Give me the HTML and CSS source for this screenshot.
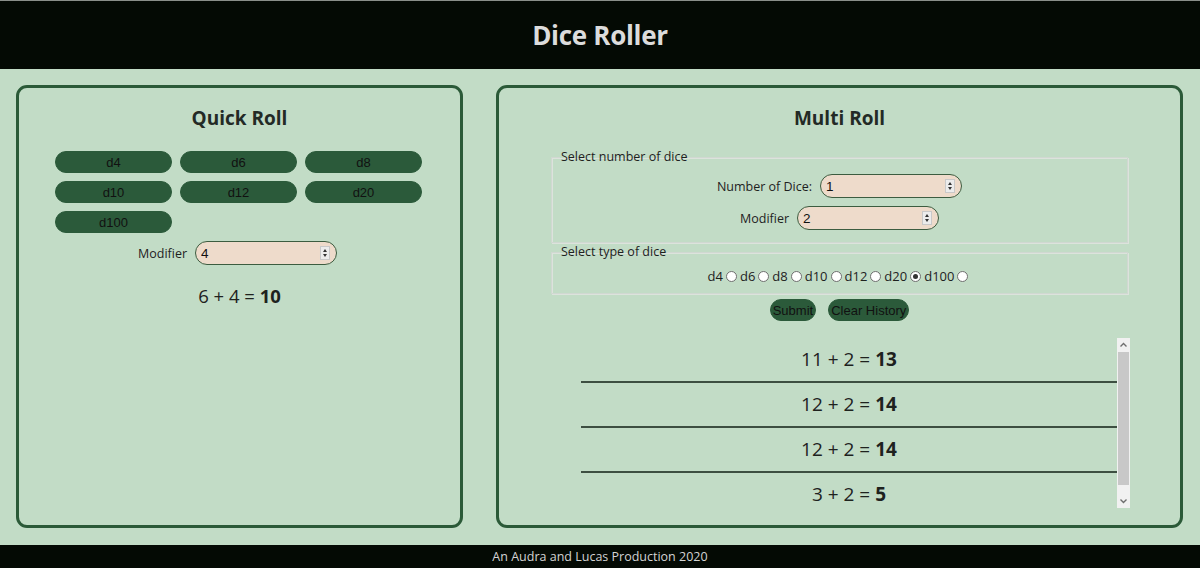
FILE: index.html
```html
<!DOCTYPE html>
<html lang="en">
<head>
<meta charset="utf-8">
<title>Dice Roller</title>
<link rel="stylesheet" href="styles.css">
</head>
<body>
<header class="topbar"><h1 class="site-title">Dice Roller</h1></header>
<main class="content">
  <section class="card quick">
    <h2 class="card-title">Quick Roll</h2>
    <div class="dice-grid">
      <button class="die-btn">d4</button>
      <button class="die-btn">d6</button>
      <button class="die-btn">d8</button>
      <button class="die-btn">d10</button>
      <button class="die-btn">d12</button>
      <button class="die-btn">d20</button>
      <button class="die-btn">d100</button>
    </div>
    <div class="field-row quick-row">
      <label class="field-label" for="qmod">Modifier</label>
      <span class="num-wrap">
        <input class="num-input" id="qmod" type="number" value="4">
        <span class="spin"><i class="spin-up"></i><i class="spin-down"></i></span>
      </span>
    </div>
    <p class="result">6 + 4 = <b>10</b></p>
  </section>
  <section class="card multi">
    <h2 class="card-title">Multi Roll</h2>
    <fieldset class="group group-count">
      <legend class="group-legend">Select number of dice</legend>
      <div class="field-row first">
        <label class="field-label" for="ndice">Number of Dice:</label>
        <span class="num-wrap">
          <input class="num-input" id="ndice" type="number" value="1">
          <span class="spin"><i class="spin-up"></i><i class="spin-down"></i></span>
        </span>
      </div>
      <div class="field-row">
        <label class="field-label" for="mmod">Modifier</label>
        <span class="num-wrap">
          <input class="num-input" id="mmod" type="number" value="2">
          <span class="spin"><i class="spin-up"></i><i class="spin-down"></i></span>
        </span>
      </div>
    </fieldset>
    <fieldset class="group group-type">
      <legend class="group-legend">Select type of dice</legend>
      <div class="radio-row">
        <label class="radio-label">d4<input class="radio" type="radio" name="die"></label>
        <label class="radio-label">d6<input class="radio" type="radio" name="die"></label>
        <label class="radio-label">d8<input class="radio" type="radio" name="die"></label>
        <label class="radio-label">d10<input class="radio" type="radio" name="die"></label>
        <label class="radio-label">d12<input class="radio" type="radio" name="die"></label>
        <label class="radio-label">d20<input class="radio" type="radio" name="die" checked></label>
        <label class="radio-label">d100<input class="radio" type="radio" name="die"></label>
      </div>
    </fieldset>
    <div class="actions">
      <button class="act-btn">Submit</button>
      <button class="act-btn">Clear History</button>
    </div>
    <div class="history">
      <div class="history-list">
        <div class="history-item">11 + 2 = <b>13</b></div>
        <div class="history-item">12 + 2 = <b>14</b></div>
        <div class="history-item">12 + 2 = <b>14</b></div>
        <div class="history-item">3 + 2 = <b>5</b></div>
      </div>
      <div class="scrollbar">
        <div class="sb-btn">
          <svg width="9" height="6" viewBox="0 0 9 6"><polyline points="1.5,4.5 4.5,1.5 7.5,4.5" fill="none" stroke="#6e6e6e" stroke-width="1.4"/></svg>
        </div>
        <div class="sb-track"><div class="sb-thumb"></div></div>
        <div class="sb-btn">
          <svg width="9" height="6" viewBox="0 0 9 6"><polyline points="1.5,1.5 4.5,4.5 7.5,1.5" fill="none" stroke="#6e6e6e" stroke-width="1.4"/></svg>
        </div>
      </div>
    </div>
  </section>
</main>
<footer class="bottombar">An Audra and Lucas Production 2020</footer>
</body>
</html>
```
FILE: styles.css
```css
* { box-sizing: border-box; }
html, body { margin: 0; padding: 0; }
body {
  width: 1200px;
  height: 568px;
  overflow: hidden;
  background: #c2dcc6;
  font-family: "Open Sans", "Noto Sans", sans-serif;
  color: #1e221e;
  display: flex;
  flex-direction: column;
}
.topbar {
  height: 69px;
  background: #040a04;
  border-top: 1px solid #8a8f8a;
  display: flex;
  align-items: center;
  justify-content: center;
}
.site-title {
  margin: 0;
  font-size: 26px;
  font-weight: 700;
  color: #dcdcdc;
  letter-spacing: -0.3px;
}
.content {
  flex: 1;
  display: grid;
  grid-template-columns: 447px 687px;
  column-gap: 33px;
  padding: 16px 17px 17px 16px;
}
.card {
  border: 3px solid #2b5a38;
  border-radius: 11px;
  display: flex;
  flex-direction: column;
}
.card-title {
  margin: 17px 0 0;
  text-align: center;
  font-size: 19px;
  line-height: 26px;
  font-weight: 700;
  color: #232a25;
}
.dice-grid {
  margin: 20px 0 0 36px;
  display: grid;
  grid-template-columns: repeat(3, 117px);
  grid-auto-rows: 22px;
  gap: 8px;
}
.die-btn, .act-btn {
  background: #2b5a3a;
  border: 1px solid #2b5a3a;
  border-radius: 11px;
  font-family: "Liberation Sans", Arial, sans-serif;
  font-size: 13px;
  color: #111;
  padding: 0;
}
.field-row {
  display: flex;
  justify-content: center;
  align-items: center;
  gap: 8px;
  margin-top: 8px;
}
.field-row.first { margin-top: 0; }
.quick-row { padding-right: 4px; }
.field-label {
  font-size: 12.5px;
  color: #1e221e;
}
.num-wrap {
  position: relative;
  display: block;
  width: 142px;
  height: 24px;
}
.num-input {
  display: block;
  width: 142px;
  height: 24px;
  border: 1.5px solid #3c5c40;
  border-radius: 12px;
  background: #eedbcb;
  font-family: "Liberation Sans", Arial, sans-serif;
  font-size: 13.5px;
  padding: 0 20px 0 5px;
  color: #111;
  -moz-appearance: textfield;
}
.num-input::-webkit-inner-spin-button,
.num-input::-webkit-outer-spin-button { -webkit-appearance: none; margin: 0; }
.spin {
  position: absolute;
  right: 7px;
  top: 5px;
  width: 10px;
  height: 14px;
  background: #ececec;
  border: 1px solid #c9c9c9;
  display: flex;
  flex-direction: column;
  align-items: center;
  justify-content: space-around;
  padding: 1px 0;
}
.spin-up, .spin-down {
  display: block;
  width: 0;
  height: 0;
  border-left: 2.5px solid transparent;
  border-right: 2.5px solid transparent;
}
.spin-up { border-bottom: 3px solid #333; }
.spin-down { border-top: 3px solid #333; }
.result {
  margin: 19px 0 0;
  text-align: center;
  font-size: 18.5px;
  line-height: 24px;
}
.result b, .history-item b { font-weight: 700; }
.group {
  margin: 17px 52px 0;
  border: 1px solid #d0d8d1;
  box-shadow: inset 1px 1px 0 #dce3dc, 1px 1px 0 #dce3dc;
  padding: 0 12px;
}
.group-legend {
  font-size: 12.5px;
  line-height: 18px;
  padding: 0 1px;
  margin-left: -4px;
}
.group-count { padding-top: 8px; padding-bottom: 12px; }
.group-type { margin-top: 0; padding-top: 6px; padding-bottom: 8px; }
.radio-row {
  display: flex;
  justify-content: center;
  align-items: center;
  font-size: 13px;
  line-height: 18px;
}
.radio-label { display: inline-flex; align-items: center; }
.radio {
  -webkit-appearance: none;
  appearance: none;
  width: 11px;
  height: 11px;
  margin: 0 3px 0 3px;
  border: 1px solid #6f6f6f;
  border-radius: 50%;
  background: #fff;
  display: inline-flex;
  align-items: center;
  justify-content: center;
}
.radio:checked::after {
  content: "";
  width: 5px;
  height: 5px;
  border-radius: 50%;
  background: #333;
}
.actions {
  display: flex;
  justify-content: center;
  gap: 12px;
  margin-top: 5px;
}
.act-btn {
  height: 22px;
  padding: 0 2px;
}
.history {
  margin: 17px 50px 0 82px;
  height: 170px;
  display: flex;
}
.history-list {
  flex: 1;
  overflow: hidden;
}
.history-item {
  text-align: center;
  font-size: 19px;
  line-height: 24px;
  padding: 9px 0 10px;
  border-bottom: 2px solid #3d4f41;
}
.scrollbar {
  width: 13px;
  display: flex;
  flex-direction: column;
  background: #f1f1f1;
}
.sb-btn {
  height: 14px;
  display: flex;
  align-items: center;
  justify-content: center;
}
.sb-track {
  flex: 1;
  padding: 0 1px;
}
.sb-thumb {
  height: 133px;
  background: #c8c8c8;
}
.bottombar {
  height: 23px;
  background: #040a04;
  color: #d4d4d4;
  font-size: 12.5px;
  line-height: 23px;
  text-align: center;
}
```
